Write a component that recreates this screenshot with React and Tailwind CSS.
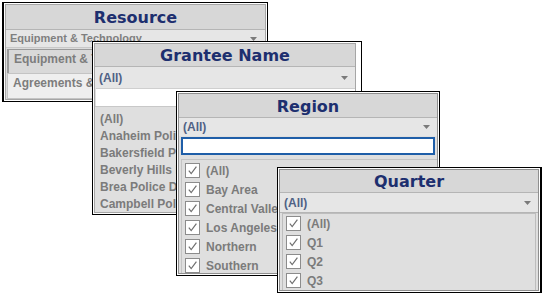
import React from "react";

const Arrow = () => (
  <svg width="7" height="4" viewBox="0 0 7 4" className="shrink-0">
    <path d="M0 0H7L3.5 4Z" fill="#7a7a7a" />
  </svg>
);

const Check = () => (
  <span className="w-[15px] h-[15px] bg-white border border-[#8c8c8c] flex items-center justify-center shrink-0">
    <svg width="11" height="11" viewBox="0 0 11 11">
      <path d="M1.8 5.6L4.2 8.6L9.4 1.6" fill="none" stroke="#6f6f6f" strokeWidth="1.2" />
    </svg>
  </span>
);

const Title = ({ children, h }) => (
  <div
    className={`${h} shrink-0 flex items-center justify-center pt-[2px] bg-[#d7d7d7] text-[16px] font-bold text-[#1d2f6f] font-['DejaVu_Sans',sans-serif] leading-none`}
  >
    {children}
  </div>
);

const CheckRow = ({ label }) => (
  <div className="h-[19px] flex items-center gap-[6px] whitespace-nowrap">
    <Check />
    <span>{label}</span>
  </div>
);

export default function App() {
  return (
    <div className="relative w-[547px] h-[298px] bg-white overflow-hidden font-['Liberation_Sans',Arial,sans-serif] font-bold">
      {/* Resource */}
      <div className="absolute left-[2px] top-[2px] w-[266px] h-[100px] border border-black border-l-2 bg-white p-px">
        <div className="h-full border border-[#a6a6a6] bg-[#dcdcdc] flex flex-col overflow-hidden">
          <Title h="h-[24px]">Resource</Title>
          <div className="h-[18px] shrink-0 border-t border-[#b5b5b5] bg-[#e6e6e6] flex items-center justify-between pl-[4px] pr-[8px] text-[11px] text-[#7f7f7f] whitespace-nowrap">
            <span>Equipment &amp; Technology</span>
            <Arrow />
          </div>
          <div className="flex-1 border-t border-[#c8c8c8] pt-px pl-px flex flex-col text-[12px] text-[#7d7d7d]">
            <div className="h-[24px] shrink-0 border-l-2 border-t border-[#9a9a9a] bg-[#d9d9d9] pl-[5px] pt-[2px] leading-[14px] whitespace-nowrap">
              Equipment &amp; Technology
            </div>
            <div className="flex-1 border border-[#c4c4c4] bg-[#efefef] pl-[5px] pt-[2px] leading-[14px] whitespace-nowrap">
              Agreements &amp; Partnerships
            </div>
          </div>
        </div>
      </div>

      {/* Grantee Name */}
      <div className="absolute left-[92px] top-[41px] w-[270px] h-[174px] border border-black bg-white p-px pr-[5px]">
        <div className="h-full border border-[#a6a6a6] bg-[#dfdfdf] flex flex-col overflow-hidden">
          <Title h="h-[22px]">Grantee Name</Title>
          <div className="h-[22px] shrink-0 border-t border-[#b5b5b5] bg-[#e6e6e6] flex items-center justify-between pl-[4px] pr-[7px] text-[12px] text-[#4f6185]">
            <span>(All)</span>
            <Arrow />
          </div>
          <div className="h-[18px] shrink-0 bg-white ml-px border-t border-[#cfcfcf]" />
          <div className="flex-1 border-t border-[#c8c8c8] pt-[3px] pl-[5px] text-[12px] text-[#7b7b7b] whitespace-nowrap">
            <div className="h-[17px] flex items-center">(All)</div>
            <div className="h-[17px] flex items-center">Anaheim Police Department</div>
            <div className="h-[17px] flex items-center">Bakersfield Police Department</div>
            <div className="h-[17px] flex items-center">Beverly Hills Police Department</div>
            <div className="h-[17px] flex items-center">Brea Police Department</div>
            <div className="h-[17px] flex items-center">Campbell Police Department</div>
          </div>
        </div>
      </div>

      {/* Region */}
      <div className="absolute left-[176px] top-[91px] w-[264px] h-[185px] border border-black bg-white p-px">
        <div className="h-full border border-[#8f8f8f] bg-[#dfdfdf] flex flex-col overflow-hidden">
          <Title h="h-[23px]">Region</Title>
          <div className="h-[19px] shrink-0 border-t border-[#b5b5b5] bg-[#e6e6e6] flex items-center justify-between pl-[4px] pr-[7px] text-[12px] text-[#4f6185]">
            <span>(All)</span>
            <Arrow />
          </div>
          <div className="h-[18px] shrink-0 mt-px mx-[2px] border-2 border-[#1f5ea8] bg-white" />
          <div className="flex-1 mt-[4px] ml-[2px] mb-px border-l border-t border-[#c4c4c4] pt-px pl-[3px] text-[12px] text-[#7b7b7b]">
            <CheckRow label="(All)" />
            <CheckRow label="Bay Area" />
            <CheckRow label="Central Valley" />
            <CheckRow label="Los Angeles" />
            <CheckRow label="Northern" />
            <CheckRow label="Southern" />
          </div>
        </div>
      </div>

      {/* Quarter */}
      <div className="absolute left-[277px] top-[167px] w-[265px] h-[126px] border border-black border-r-2 bg-white p-px">
        <div className="h-full border border-[#8f8f8f] bg-[#dfdfdf] flex flex-col overflow-hidden">
          <Title h="h-[22px]">Quarter</Title>
          <div className="h-[21px] shrink-0 border-t border-b border-[#b5b5b5] bg-[#e6e6e6] flex items-center justify-between pl-[4px] pr-[7px] text-[12px] text-[#4f6185]">
            <span>(All)</span>
            <Arrow />
          </div>
          <div className="flex-1 mx-[2px] mb-[2px] border border-[#bdbdbd] pl-[3px] text-[12px] text-[#7b7b7b]">
            <CheckRow label="(All)" />
            <CheckRow label="Q1" />
            <CheckRow label="Q2" />
            <CheckRow label="Q3" />
          </div>
        </div>
      </div>
    </div>
  );
}
